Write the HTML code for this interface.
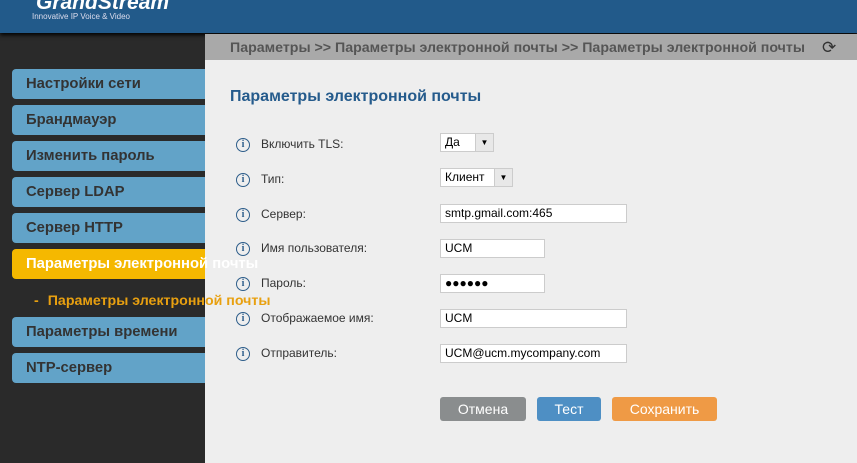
<!DOCTYPE html><html><head><meta charset="utf-8"><style>
body{margin:0;width:857px;height:463px;overflow:hidden;font-family:"Liberation Sans",sans-serif;background:#2a2a2a;position:relative}
.hd{position:absolute;left:0;top:0;width:857px;height:33px;background:#225a8a;box-shadow:0 2px 4px #000}
.logo{position:absolute;left:36px;top:-9px;color:#fff;font-weight:bold;font-style:italic;font-size:21px}
.tag{position:absolute;left:32px;top:12px;color:#dde;font-size:8px}
.bc{position:absolute;left:205px;top:34px;width:652px;height:26px;background:#a9a9a9;color:#555;font-weight:bold;font-size:14.2px;line-height:28px;padding-left:25px;box-sizing:border-box;white-space:nowrap}
.ct{position:absolute;left:205px;top:60px;width:652px;height:403px;background:#eee}
.mi{position:absolute;left:12px;width:193px;height:30px;background:#62a3c8;border-radius:4px 0 0 4px;color:#333;font-weight:bold;font-size:14.8px;line-height:30px;padding-left:14px;box-sizing:border-box}
.act{background:#f5b800;color:#fff;white-space:nowrap;overflow:visible;width:193px}
.sub{position:absolute;left:34px;top:293px;color:#e8a010;font-weight:bold;font-size:14.2px;white-space:nowrap}
h1{position:absolute;left:230px;top:88px;margin:0;font-size:16px;color:#255b8c}
.r{position:absolute;left:236px;font-size:12px;color:#333}
.i{display:inline-block;width:12px;height:12px;border:1.5px solid #2d5d8a;border-radius:50%;text-align:center;font:bold 10px/12px "Liberation Serif",serif;color:#2d5d8a;margin-right:11px;vertical-align:middle}
.in{position:absolute;left:440px;height:19px;background:#fff;border:1px solid #ccc;box-sizing:border-box;font-size:12px;line-height:17px;padding-left:4px;color:#000}
.sel .ar{position:absolute;right:0;top:0;width:17px;height:17px;background:#e8e8e8;border-left:1px solid #ccc;font-size:8px;text-align:center}
.b{position:absolute;top:397px;height:24px;border-radius:3px;color:#fff;font-size:14px;line-height:24px;text-align:center}
</style></head><body>
<div class="hd"><div class="logo">GrandStream</div><div class="tag">Innovative IP Voice &amp; Video</div></div>
<div class="bc">Параметры &gt;&gt; Параметры электронной почты &gt;&gt; Параметры электронной почты</div>
<div style="position:absolute;left:822px;top:38px;font-size:17px;color:#333">⟳</div>
<div class="ct"></div>
<div class="mi" style="top:69px">Настройки сети</div>
<div class="mi" style="top:105px">Брандмауэр</div>
<div class="mi" style="top:141px">Изменить пароль</div>
<div class="mi" style="top:177px">Сервер LDAP</div>
<div class="mi" style="top:213px">Сервер HTTP</div>
<div class="mi act" style="top:249px">Параметры электронной почты</div>
<div class="sub"><span style="margin-right:9px">-</span>Параметры электронной почты</div>
<div class="mi" style="top:317px">Параметры времени</div>
<div class="mi" style="top:353px">NTP-сервер</div>
<h1>Параметры электронной почты</h1>
<div class="r" style="top:137px"><span class="i">i</span>Включить TLS:</div>
<div class="r" style="top:172px"><span class="i">i</span>Тип:</div>
<div class="r" style="top:207px"><span class="i">i</span>Сервер:</div>
<div class="r" style="top:241px"><span class="i">i</span>Имя пользователя:</div>
<div class="r" style="top:276px"><span class="i">i</span>Пароль:</div>
<div class="r" style="top:311px"><span class="i">i</span>Отображаемое имя:</div>
<div class="r" style="top:346px"><span class="i">i</span>Отправитель:</div>
<div class="in sel" style="top:133px;width:54px">Да<span class="ar">▼</span></div>
<div class="in sel" style="top:168px;width:73px">Клиент<span class="ar">▼</span></div>
<div class="in" style="top:204px;width:187px">smtp.gmail.com:465</div>
<div class="in" style="top:239px;width:105px">UCM</div>
<div class="in" style="top:274px;width:105px">●●●●●●</div>
<div class="in" style="top:309px;width:187px">UCM</div>
<div class="in" style="top:344px;width:187px">UCM@ucm.mycompany.com</div>
<div class="b" style="left:440px;width:86px;background:#8a8d8e">Отмена</div>
<div class="b" style="left:537px;width:64px;background:#4e8fc4">Тест</div>
<div class="b" style="left:612px;width:105px;background:#ef9a45">Сохранить</div>
</body></html>
